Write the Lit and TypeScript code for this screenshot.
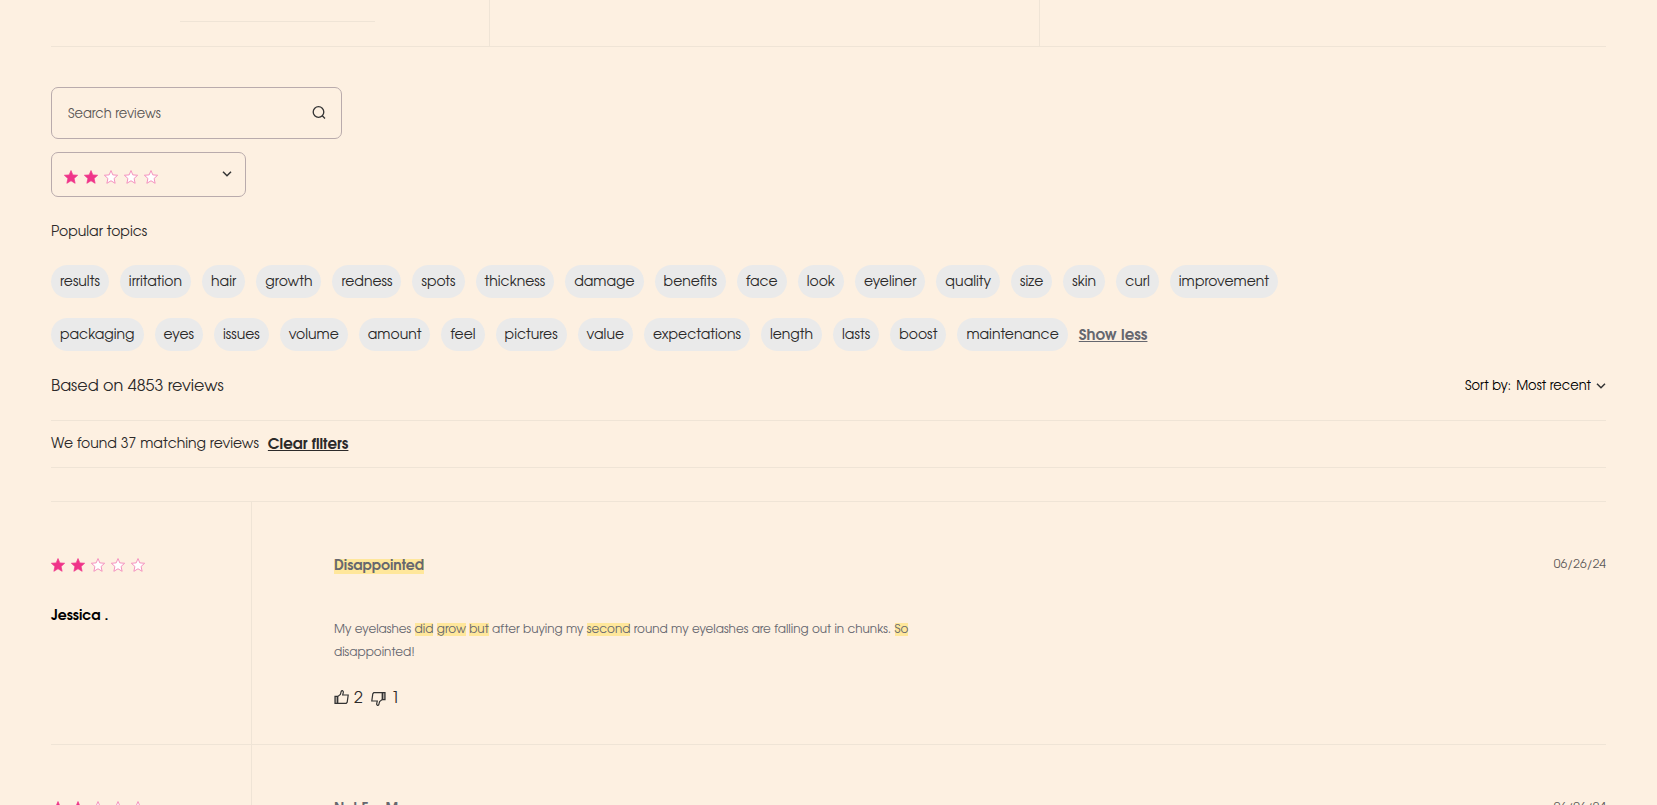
import { LitElement, html, css, svg } from "lit";
import { customElement, property } from "lit/decorators.js";

const STAR = "M10 .8 12.6 7 19.5 7.5 14.4 12.1 15.9 19 10 15.4 4.1 19 5.6 12.1 .5 7.5 7.4 7Z";

@customElement("star-rating")
class StarRating extends LitElement {
  @property({ type: Number }) value = 0;

  static styles = css`
    :host { display: flex; gap: 6px; }
    .star { width: 14px; height: 14px; flex: none; overflow: visible; }
    .full { fill: #ef3489; stroke: #ef3489; stroke-width: 1; }
    .empty { fill: #ffffff; stroke: #f48fbd; stroke-width: 1.4; }
  `;

  render() {
    return [1, 2, 3, 4, 5].map(
      (n) => html`<svg class="star" viewBox="0 0 20 20" aria-hidden="true">
        <path class=${n <= this.value ? "full" : "empty"} d=${STAR}></path>
      </svg>`
    );
  }
}

type Part = { text: string; mark?: boolean };
type Review = { author: string; rating: number; title: Part; date: string; body: Part[]; up: number; down: number };

const TOPICS = [
  "results", "irritation", "hair", "growth", "redness", "spots", "thickness", "damage", "benefits",
  "face", "look", "eyeliner", "quality", "size", "skin", "curl", "improvement", "packaging", "eyes",
  "issues", "volume", "amount", "feel", "pictures", "value", "expectations", "length", "lasts",
  "boost", "maintenance",
];

const REVIEWS: Review[] = [
  {
    author: "Jessica .",
    rating: 2,
    title: { text: "Disappointed", mark: true },
    date: "06/26/24",
    body: [
      { text: "My eyelashes " }, { text: "did", mark: true }, { text: " " }, { text: "grow", mark: true },
      { text: " " }, { text: "but", mark: true }, { text: " after buying my " }, { text: "second", mark: true },
      { text: " round my eyelashes are falling out in chunks. " }, { text: "So", mark: true },
      { text: " disappointed!" },
    ],
    up: 2,
    down: 1,
  },
  { author: "", rating: 2, title: { text: "Not For Me" }, date: "06/06/24", body: [], up: 0, down: 0 },
];

const part = (p: Part) => (p.mark ? html`<mark class="hit">${p.text}</mark>` : p.text);

const chevron = html`<svg class="chevron" viewBox="0 0 10 6" aria-hidden="true"><path d="M1 .8 5 4.8 9 .8"></path></svg>`;

const thumb = svg`
  <path class="cuff" d="M1 6.4h2.6v7H1z"></path>
  <path d="M3.6 6.6 6.4 4.4 7.2 1.4Q7.8.4 8.8.9 9.5 1.4 9.3 2.4L8.7 5H14.2L13.2 12.2 12.2 13.4H3.6Z"></path>
`;

@customElement("app-root")
class AppRoot extends LitElement {
  static styles = css`
    :host {
      display: block;
      box-sizing: border-box;
      height: 100vh;
      overflow-y: auto;
      scrollbar-width: none;
      padding: 0 51px;
      background: #fdf0e1;
      color: #2c2a2a;
      font-family: "ITC Avant Garde Gothic", "TeX Gyre Adventor", Inter, sans-serif;
      font-size: 14px;
      line-height: 20px;
      --line: #efe4d6;
      --muted: #66676f;
    }
    * { box-sizing: border-box; }
    button, input, select { font: inherit; color: inherit; }
    button { border: 0; padding: 0; background: none; cursor: pointer; }
    h2, h3, p, ul { margin: 0; padding: 0; font-size: inherit; font-weight: 400; }

    .summary {
      display: grid;
      grid-template-columns: 438fr 550fr 567fr;
      height: 47px;
      border-bottom: 1px solid var(--line);
    }
    .summary-cell + .summary-cell { border-left: 1px solid var(--line); }
    .bar { width: 195px; margin: 21px 0 0 129px; height: 1px; background: var(--line); }

    .search, .rating-filter { border: 1px solid #b9abac; border-radius: 7px; }
    .search { display: flex; align-items: center; width: 291px; height: 52px; margin-top: 40px; padding: 0 15px 0 16px; }
    .search-input { flex: 1; min-width: 0; border: 0; padding: 2px 0 0; background: none; outline: none; font-size: 13px; }
    .search-input::placeholder { color: #5c5857; opacity: 1; }
    .search-icon { display: block; width: 14px; height: 14px; fill: none; stroke: #333333; stroke-width: 1.3; }

    .rating-filter {
      display: grid;
      grid-template-columns: 1fr auto;
      grid-template-rows: 100%;
      align-items: center;
      width: 195px;
      height: 45px;
      margin-top: 13px;
      padding: 0 13px 0 12px;
    }
    .rating-select { grid-area: 1 / 1 / 2 / 3; width: 100%; height: 100%; opacity: 0; cursor: pointer; }
    .rating-value { grid-area: 1 / 1 / 2 / 2; padding-top: 4px; pointer-events: none; }
    .rating-filter .chevron { grid-area: 1 / 2 / 2 / 3; pointer-events: none; }
    .chevron { width: 10px; height: 6px; margin-bottom: 2px; fill: none; stroke: #333333; stroke-width: 1.5; }

    .heading { margin-top: 26px; }
    .topics { display: flex; flex-wrap: wrap; gap: 20px 11px; width: 80%; margin-top: 22px; list-style: none; }
    .topic { display: block; height: 33px; padding: 2px 9px 0; border-radius: 17px; background: #eaeaea; }
    .less { height: 33px; padding-top: 2px; color: var(--muted); }
    .less, .clear { font-size: 15px; font-weight: 700; text-decoration: underline; }

    .toolbar { display: flex; justify-content: space-between; align-items: center; margin-top: 23px; padding-bottom: 21px; line-height: 25px; border-bottom: 1px solid var(--line); }
    .count { font-size: 16px; }
    .sort { display: flex; align-items: center; gap: 5px; font-size: 13px; color: #000000; }
    .sort-select { appearance: none; border: 0; padding: 0; background: none; field-sizing: content; }
    .found { display: flex; align-items: center; gap: 9px; height: 47px; padding-top: 2px; border-bottom: 1px solid var(--line); }

    .reviews { margin-top: 33px; border-top: 1px solid var(--line); }
    .review { display: grid; grid-template-columns: 201px 1fr; min-height: 243px; border-bottom: 1px solid var(--line); }
    .reviewer { padding-top: 56px; border-right: 1px solid var(--line); }
    .author { margin-top: 35px; font-weight: 700; color: #000000; }
    .content { padding: 55px 0 0 82px; }
    .title-row { display: flex; justify-content: space-between; align-items: center; color: var(--muted); }
    .title { font-weight: 700; }
    .date { font-size: 12px; line-height: 16px; padding-bottom: 4px; color: #5c5857; }
    .text { max-width: 600px; margin-top: 41px; font-size: 12px; line-height: 23px; color: var(--muted); }
    .hit { padding: 1px 0; background: #ffe79b; color: inherit; }
    .votes { display: flex; gap: 8px; margin-top: 23px; }
    .vote { display: flex; align-items: center; gap: 5px; font-size: 16px; line-height: 24px; }
    .thumb { width: 15px; height: 15px; margin-bottom: 4px; fill: none; stroke: #333333; stroke-width: 1.2; }
    .thumb .cuff { fill: #a9a29b; }
    .down { margin-bottom: 1px; transform: rotate(180deg); }
  `;

  render() {
    return html`
      <div class="summary">
        <div class="summary-cell"><div class="bar"></div></div>
        <div class="summary-cell"></div>
        <div class="summary-cell"></div>
      </div>

      <div class="search">
        <input class="search-input" type="text" placeholder="Search reviews" aria-label="Search reviews" />
        <button aria-label="Search">
          <svg class="search-icon" viewBox="0 0 14 14"><circle cx="6.5" cy="6" r="5.3"></circle><path d="M10.3 9.8 13 12.5"></path></svg>
        </button>
      </div>

      <div class="rating-filter">
        <star-rating class="rating-value" value="2"></star-rating>
        ${chevron}
        <select class="rating-select" aria-label="Rating">
          ${[5, 4, 3, 2, 1].map((n) => html`<option value=${n} ?selected=${n === 2}>${"★".repeat(n)}</option>`)}
        </select>
      </div>

      <h2 class="heading">Popular topics</h2>
      <ul class="topics">
        ${TOPICS.map((t) => html`<li><button class="topic">${t}</button></li>`)}
        <li><button class="less">Show less</button></li>
      </ul>

      <div class="toolbar">
        <p class="count">Based on 4853 reviews</p>
        <div class="sort">
          <label for="sort">Sort by:</label>
          <select class="sort-select" id="sort"><option>Most recent</option></select>
          ${chevron}
        </div>
      </div>
      <div class="found">
        <span>We found 37 matching reviews</span>
        <button class="clear">Clear filters</button>
      </div>

      <div class="reviews">
        ${REVIEWS.map(
          (r) => html`<article class="review">
            <div class="reviewer">
              <star-rating .value=${r.rating}></star-rating>
              <p class="author">${r.author}</p>
            </div>
            <div class="content">
              <div class="title-row">
                <h3 class="title">${part(r.title)}</h3>
                <time class="date">${r.date}</time>
              </div>
              ${r.body.length
                ? html`<p class="text">${r.body.map(part)}</p>
                    <div class="votes">
                      <button class="vote" aria-label="Helpful"><svg class="thumb" viewBox="0 0 15 15">${thumb}</svg>${r.up}</button>
                      <button class="vote" aria-label="Not helpful"><svg class="thumb down" viewBox="0 0 15 15">${thumb}</svg>${r.down}</button>
                    </div>`
                : ""}
            </div>
          </article>`
        )}
      </div>
    `;
  }
}
